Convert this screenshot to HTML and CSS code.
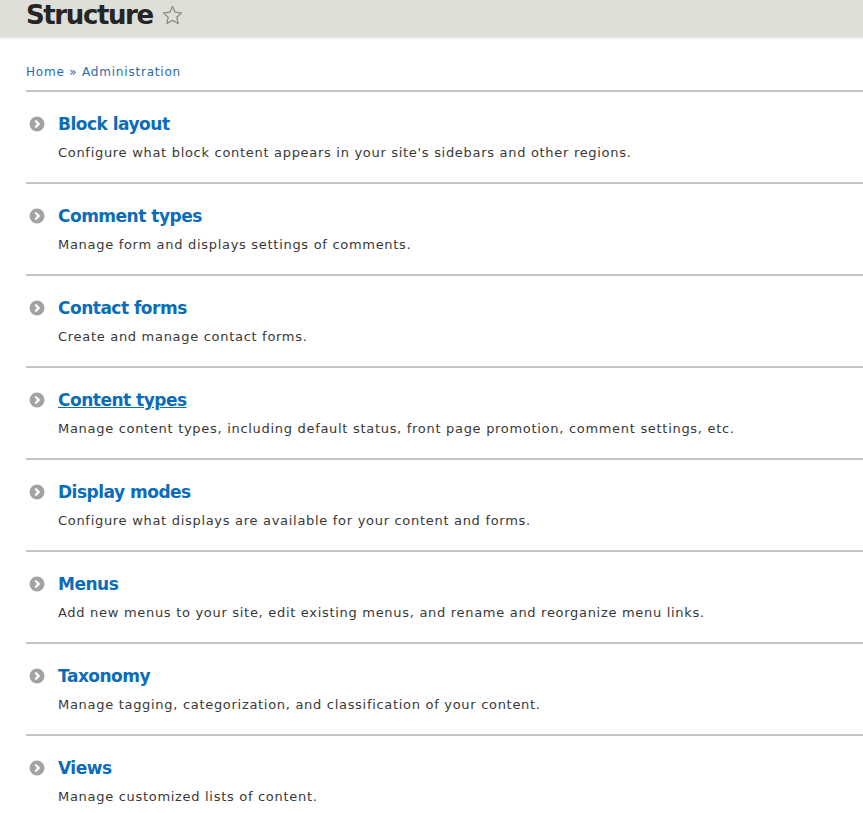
FILE: index.html
```html
<!DOCTYPE html>
<html>
<head>
<meta charset="utf-8">
<link rel="stylesheet" href="styles.css">
</head>
<body>
<header class="page-header">
  <h1 class="page-title"><span class="title-text">Structure</span> <span class="star"><svg width="23" height="23" viewBox="0 0 24 24"><path d="M12 2.5l2.8 6.1 6.6.7-4.9 4.5 1.4 6.6L12 17.1l-5.9 3.3 1.4-6.6-4.9-4.5 6.6-.7z" fill="none" stroke="#8a8a84" stroke-width="1.3" stroke-linejoin="round"/></svg></span></h1>
</header>
<main class="content">
  <nav class="breadcrumb"><a href="#">Home</a> » <a href="#">Administration</a></nav>
  <ul class="admin-list">
    <li class="item"><div class="item-title"><span class="icon"><svg width="16" height="16" viewBox="0 0 16 16"><circle cx="8" cy="8" r="7.5" fill="#a3a3a3"/><path d="M6.3 4.6L9.7 8l-3.4 3.4" fill="none" stroke="#fff" stroke-width="2.2"/></svg></span><a href="#">Block layout</a></div><div class="item-desc">Configure what block content appears in your site's sidebars and other regions.</div></li>
    <li class="item"><div class="item-title"><span class="icon"><svg width="16" height="16" viewBox="0 0 16 16"><circle cx="8" cy="8" r="7.5" fill="#a3a3a3"/><path d="M6.3 4.6L9.7 8l-3.4 3.4" fill="none" stroke="#fff" stroke-width="2.2"/></svg></span><a href="#">Comment types</a></div><div class="item-desc">Manage form and displays settings of comments.</div></li>
    <li class="item"><div class="item-title"><span class="icon"><svg width="16" height="16" viewBox="0 0 16 16"><circle cx="8" cy="8" r="7.5" fill="#a3a3a3"/><path d="M6.3 4.6L9.7 8l-3.4 3.4" fill="none" stroke="#fff" stroke-width="2.2"/></svg></span><a href="#">Contact forms</a></div><div class="item-desc">Create and manage contact forms.</div></li>
    <li class="item"><div class="item-title"><span class="icon"><svg width="16" height="16" viewBox="0 0 16 16"><circle cx="8" cy="8" r="7.5" fill="#a3a3a3"/><path d="M6.3 4.6L9.7 8l-3.4 3.4" fill="none" stroke="#fff" stroke-width="2.2"/></svg></span><a href="#" class="hover">Content types</a></div><div class="item-desc">Manage content types, including default status, front page promotion, comment settings, etc.</div></li>
    <li class="item"><div class="item-title"><span class="icon"><svg width="16" height="16" viewBox="0 0 16 16"><circle cx="8" cy="8" r="7.5" fill="#a3a3a3"/><path d="M6.3 4.6L9.7 8l-3.4 3.4" fill="none" stroke="#fff" stroke-width="2.2"/></svg></span><a href="#">Display modes</a></div><div class="item-desc">Configure what displays are available for your content and forms.</div></li>
    <li class="item"><div class="item-title"><span class="icon"><svg width="16" height="16" viewBox="0 0 16 16"><circle cx="8" cy="8" r="7.5" fill="#a3a3a3"/><path d="M6.3 4.6L9.7 8l-3.4 3.4" fill="none" stroke="#fff" stroke-width="2.2"/></svg></span><a href="#">Menus</a></div><div class="item-desc">Add new menus to your site, edit existing menus, and rename and reorganize menu links.</div></li>
    <li class="item"><div class="item-title"><span class="icon"><svg width="16" height="16" viewBox="0 0 16 16"><circle cx="8" cy="8" r="7.5" fill="#a3a3a3"/><path d="M6.3 4.6L9.7 8l-3.4 3.4" fill="none" stroke="#fff" stroke-width="2.2"/></svg></span><a href="#">Taxonomy</a></div><div class="item-desc">Manage tagging, categorization, and classification of your content.</div></li>
    <li class="item"><div class="item-title"><span class="icon"><svg width="16" height="16" viewBox="0 0 16 16"><circle cx="8" cy="8" r="7.5" fill="#a3a3a3"/><path d="M6.3 4.6L9.7 8l-3.4 3.4" fill="none" stroke="#fff" stroke-width="2.2"/></svg></span><a href="#">Views</a></div><div class="item-desc">Manage customized lists of content.</div></li>
  </ul>
</main>
</body>
</html>
```
FILE: styles.css
```css
html, body {
  margin: 0;
  padding: 0;
  background: #fff;
  font-family: "DejaVu Sans", Verdana, sans-serif;
  color: #333;
}
.page-header {
  background: #dedfd6;
  height: 37px;
  border-bottom: 2px solid #ececec;
  padding-left: 26px;
  box-sizing: content-box;
  overflow: hidden;
}
.page-title {
  margin: 0;
  font-size: 26px;
  line-height: 30px;
  font-weight: bold;
  color: #252525;
  display: flex;
  align-items: center;
  gap: 8px;
}
.title-text {
  letter-spacing: -1.4px;
}
.star {
  display: flex;
  margin-top: 1px;
}
.content {
  padding-left: 26px;
}
.breadcrumb {
  margin-top: 25px;
  margin-bottom: 10px;
  font-size: 12px;
  line-height: 16px;
  letter-spacing: 0.8px;
  color: #2a6aa8;
}
.breadcrumb a {
  color: #2a6aa8;
  text-decoration: none;
}
.admin-list {
  list-style: none;
  margin: 0;
  padding: 0;
}
.item {
  border-top: 2px solid #c6c6c6;
  padding: 21px 0 20px;
}
.item-title {
  display: flex;
  align-items: center;
  gap: 13px;
  height: 22px;
  padding-left: 3px;
}
.icon {
  display: flex;
}
.item-title a {
  font-size: 17px;
  font-weight: bold;
  letter-spacing: -0.5px;
  color: #0a6cba;
  text-decoration: none;
}
.item-title a.hover {
  text-decoration: underline;
}
.item-desc {
  margin-top: 9px;
  margin-left: 32px;
  font-size: 13px;
  line-height: 18px;
  letter-spacing: 0.7px;
  color: #383838;
}
```
